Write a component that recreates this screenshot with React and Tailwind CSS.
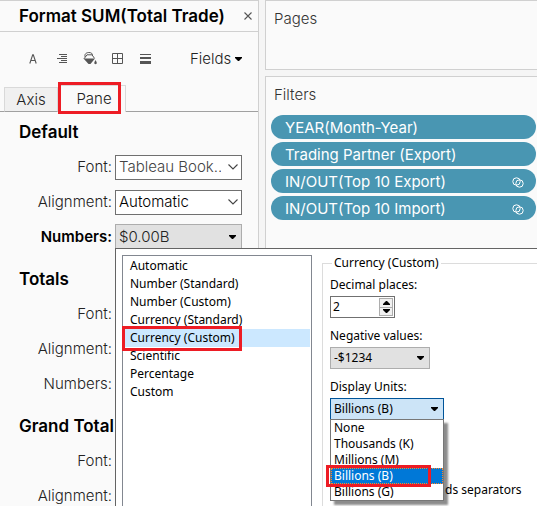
import React from "react";

const uiFont = "font-['Inter','Liberation_Sans',sans-serif]";
const dialogFont = "font-['Noto_Sans','DejaVu_Sans',sans-serif]";

function Caret({ className = "" }) {
  return (
    <svg viewBox="0 0 7 4" className={`h-1 w-[7px] shrink-0 ${className}`} fill="#000" aria-hidden="true">
      <path d="M0 0h7v1L4 4H3L0 1z" />
    </svg>
  );
}

function Chevron() {
  return (
    <svg viewBox="0 0 10 6" className="h-1.5 w-2.5" fill="none" stroke="#444" strokeWidth="1.1" aria-hidden="true">
      <path d="M.5.5 5 5 9.5.5" />
    </svg>
  );
}

function Heading({ children }) {
  return <h2 className="pt-2.5 pb-3 pl-[19px] text-[17px] leading-5 font-semibold whitespace-nowrap text-black">{children}</h2>;
}

function Row({ id, label, bold, children }) {
  return (
    <div className="mb-2.5 flex h-[25px] items-center gap-[3px]">
      <label htmlFor={id} className={`w-28 shrink-0 text-right text-[15px] leading-5 ${bold ? "font-semibold text-black" : "font-light text-[#222]"}`}>
        {label}:
      </label>
      {children}
    </div>
  );
}

function Combo({ id, value, muted }) {
  return (
    <div className="relative h-[25px] w-[127px]">
      <select id={id} className={`h-full w-full appearance-none border border-[#707070] bg-white pr-5 pl-[3px] text-[15px] leading-5 font-light ${muted ? "text-[#444]" : "text-black"}`}>
        <option>{value}</option>
      </select>
      <span className="pointer-events-none absolute inset-y-0 right-1 flex items-center">
        <Chevron />
      </span>
    </div>
  );
}

const formats = ["Automatic", "Number (Standard)", "Number (Custom)", "Currency (Standard)", "Currency (Custom)", "Scientific", "Percentage", "Custom"];
const units = ["None", "Thousands (K)", "Millions (M)", "Billions (B)", "Billions (G)"];

function FormatList() {
  return (
    <ul className="h-full w-[190px] shrink-0 border border-[#828790] bg-white p-px">
      {formats.map((name) => {
        const selected = name === "Currency (Custom)";
        return (
          <li key={name} className="relative">
            <button type="button" className={`block h-[18px] w-full pl-1.5 text-left leading-[18px] ${selected ? "bg-[#cce8ff]" : ""}`}>
              {name}
            </button>
            {selected && <span className="pointer-events-none absolute -top-[3px] -left-0.5 z-10 h-[25px] w-[120px] border-3 border-[#ed1c24]" />}
          </li>
        );
      })}
    </ul>
  );
}

function UnitMenu() {
  return (
    <ul className="absolute top-[21px] left-0 z-10 w-full border border-[#777] bg-white shadow-[4px_4px_2px_rgba(0,0,0,0.45)]">
      {units.map((name) => {
        const selected = name === "Billions (B)";
        return (
          <li key={name} className="relative">
            <button
              type="button"
              className={`block h-4 w-full pl-[3px] text-left leading-4 ${selected ? "bg-[#0078d7] text-white outline-1 -outline-offset-1 outline-dotted outline-[#ff8728]" : ""}`}
            >
              {name}
            </button>
            {selected && <span className="pointer-events-none absolute -top-[3px] -left-[5px] z-10 h-[22px] w-[105px] border-3 border-[#ed1c24]" />}
          </li>
        );
      })}
    </ul>
  );
}

function NumberPopup() {
  return (
    <div className={`absolute top-6 left-0 z-20 flex h-screen w-screen gap-2.5 border border-[#646464] bg-white p-1.5 text-[12px] text-black ${dialogFont}`}>
      <FormatList />
      <fieldset className="mt-0 h-full grow border border-[#dcdcdc] px-[7px]">
        <legend className="ml-0.5 h-4 px-0.5 leading-4">Currency (Custom)</legend>
        <label htmlFor="decimals" className="mt-1.5 block h-4 leading-4">Decimal places:</label>
        <div className="mt-[3px] flex h-[22px] w-[65px] border border-[#707070] bg-white p-px">
          <input id="decimals" type="text" defaultValue="2" className="w-0 grow pl-px outline-none" />
          <div className="flex w-3.5 flex-col">
            <button type="button" aria-label="Increase" className="flex grow items-center justify-center border border-[#adadad] bg-[#f0f0f0]">
              <Caret className="rotate-180" />
            </button>
            <button type="button" aria-label="Decrease" className="flex grow items-center justify-center border border-t-0 border-[#adadad] bg-[#f0f0f0]">
              <Caret />
            </button>
          </div>
        </div>
        <label htmlFor="negative" className="mt-2.5 block h-4 leading-4">Negative values:</label>
        <div className="relative mt-[3px] h-[22px] w-[100px]">
          <select id="negative" className="h-full w-full appearance-none border border-[#adadad] bg-[#e1e1e1] pl-[3px]">
            <option>-$1234</option>
          </select>
          <Caret className="pointer-events-none absolute top-[9px] right-1.5" />
        </div>
        <label htmlFor="units" className="mt-2.5 block h-4 leading-4">Display Units:</label>
        <div className="relative mt-[3px] h-[22px] w-[114px]">
          <select id="units" className="h-full w-full appearance-none border border-[#005499] bg-[#cce4f7] pl-[3px]">
            <option>Billions (B)</option>
          </select>
          <Caret className="pointer-events-none absolute top-[9px] right-1.5" />
          <UnitMenu />
        </div>
        <label className="mt-[62px] flex h-4 items-center gap-[103px] leading-4 whitespace-nowrap">
          <input type="checkbox" className="size-3" />
          ds separators
        </label>
      </fieldset>
    </div>
  );
}

function Toolbar() {
  return (
    <div className="flex h-[53px] items-center pl-[29px] text-[#555]">
      <button type="button" aria-label="Font" className="w-7">
        <svg viewBox="0 0 8 10" className="h-2.5 w-2" fill="none" stroke="currentColor" strokeWidth="1.1">
          <path d="M.8 9.5 3.7.8h.6l2.9 8.7M1.8 6.5h4.400" />
        </svg>
      </button>
      <button type="button" aria-label="Alignment" className="w-[26px]">
        <svg viewBox="0 0 10 10" className="size-2.5" fill="none" stroke="currentColor">
          <path d="M2 .5h8M4 2.5h6M0 4.5h10M4 6.5h6M2 8.5h8" />
        </svg>
      </button>
      <button type="button" aria-label="Shading" className="w-[29px]">
        <svg viewBox="0 0 14 13" className="h-[13px] w-3.5" fill="none" stroke="currentColor" strokeWidth="1">
          <path d="M1 6.800 4 2.800h5l2.500 3.500M2.200 5C1 1.500 4 .5 6 .5s4 1 3.500 3.500" />
          <path d="M.5 6.500h11.500L7.500 12h-2z" fill="currentColor" stroke="none" />
          <path d="M12.500 8c.8 1.500 1.300 2.300 1.300 3s-.5 1.200-1.300 1.200-1.200-.5-1.200-1.200.5-1.500 1.200-3z" fill="currentColor" stroke="none" />
        </svg>
      </button>
      <button type="button" aria-label="Borders" className="w-7">
        <svg viewBox="0 0 11 11" className="size-[11px]" fill="none" stroke="currentColor">
          <path d="M.5.5h10v10H.5zM5.500.5v10M.5 5.500h10" />
        </svg>
      </button>
      <button type="button" aria-label="Lines" className="w-[50px]">
        <svg viewBox="0 0 11 10" className="h-2.5 w-[11px]" fill="currentColor">
          <path d="M0 0h11v1H0zM0 3h11v2H0zM0 7h11v3H0z" />
        </svg>
      </button>
      <button type="button" className="flex items-center gap-1 text-[15px] leading-5 font-light text-[#222]">
        Fields <Caret />
      </button>
    </div>
  );
}

function Tabs() {
  return (
    <div className="flex h-[27px] items-end text-[15px] leading-5 font-light text-[#222]">
      <span className="w-1 self-stretch border-b border-[#a0a0a0]" />
      <button type="button" className="h-[25px] w-[54px] border border-b-[#a0a0a0] border-[#d9d9d9] bg-[#f0f0f0]">Axis</button>
      <div className="relative">
        <button type="button" className="h-[27px] w-[68px] border border-b-0 border-[#d9d9d9] pl-1">Pane</button>
        <span className="pointer-events-none absolute -top-[3px] left-0 h-8 w-[63px] border-3 border-[#ed1c24]" />
      </div>
      <span className="grow self-stretch border-b border-[#a0a0a0]" />
    </div>
  );
}

function FormatPane() {
  return (
    <section className="w-[259px] shrink-0 border-t border-r border-[#d0d0d0] bg-[#fafafa]">
      <header className="flex h-[31px] items-center justify-between border-b border-[#d0d0d0] pr-1 pl-[19px]">
        <h1 className="text-[17px] leading-6 font-semibold whitespace-nowrap text-black">Format SUM(Total Trade)</h1>
        <button type="button" aria-label="Close" className="flex size-3 items-center justify-center">
          <svg viewBox="0 0 8 8" className="size-2" stroke="#555" strokeWidth="1.1"><path d="m.5.5 7 7m0-7-7 7" /></svg>
        </button>
      </header>
      <Toolbar />
      <Tabs />
      <Heading>Default</Heading>
      <Row id="font" label="Font"><Combo id="font" value="Tableau Book.." muted /></Row>
      <Row id="align" label="Alignment"><Combo id="align" value="Automatic" /></Row>
      <Row id="numbers" label="Numbers" bold>
        <div className="relative h-[25px] w-[127px]">
          <button id="numbers" type="button" className="flex h-full w-full items-center justify-between border border-[#adadad] bg-[#e1e1e1] pr-[5px] pl-[3px] text-[15px] leading-5 font-light text-[#222]">
            $0.00B <Caret />
          </button>
          <NumberPopup />
        </div>
      </Row>
      <Heading>Totals</Heading>
      <Row label="Font" />
      <Row label="Alignment" />
      <Row label="Numbers" />
      <Heading>Grand Total</Heading>
      <Row label="Font" />
      <Row label="Alignment" />
    </section>
  );
}

const filters = [
  { name: "YEAR(Month-Year)" },
  { name: "Trading Partner (Export)" },
  { name: "IN/OUT(Top 10 Export)", set: true },
  { name: "IN/OUT(Top 10 Import)", set: true },
];

function Shelves() {
  return (
    <div className="flex grow flex-col gap-1.5">
      <section className="h-[70px] border border-r-0 border-[#d0d0d0] bg-[#fafafa] px-2 py-2">
        <h2 className="text-[15px] leading-5 font-light text-[#333]">Pages</h2>
      </section>
      <section className="grow border border-r-0 border-[#d0d0d0] bg-[#fafafa] py-2 pr-px pl-[5px]">
        <h2 className="pl-[3px] text-[15px] leading-5 font-light text-[#333]">Filters</h2>
        <ul className="mt-2.5 flex flex-col gap-[3px]">
          {filters.map((f) => (
            <li key={f.name}>
              <button type="button" className="flex h-6 w-full items-center justify-between rounded-full bg-[#4996b2] pt-0.5 pr-3 pl-3.5 text-[15px] leading-5 text-white">
                {f.name}
                {f.set && (
                  <svg viewBox="0 0 12 11" className="h-[11px] w-3" fill="none" stroke="#fff" aria-hidden="true">
                    <circle cx="4.500" cy="4.500" r="3.700" />
                    <circle cx="7.500" cy="6.500" r="3.700" />
                  </svg>
                )}
              </button>
            </li>
          ))}
        </ul>
      </section>
    </div>
  );
}

export default function App() {
  return (
    <main className={`flex h-screen gap-1.5 overflow-hidden bg-[#f5f5f5] ${uiFont}`}>
      <FormatPane />
      <Shelves />
    </main>
  );
}
